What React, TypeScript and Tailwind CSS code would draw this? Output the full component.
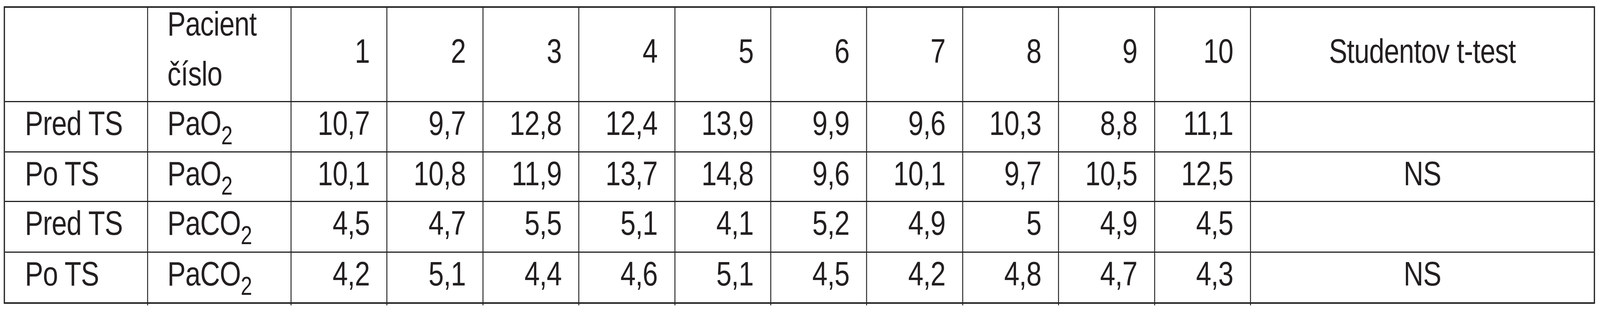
import React, { useLayoutEffect, useState } from 'react';

type Row = {
    label: string;
    param: 'O' | 'CO';
    values: string[];
    test: string;
};

const rows: Row[] = [
    { label: 'Pred TS', param: 'O', values: ['10,7', '9,7', '12,8', '12,4', '13,9', '9,9', '9,6', '10,3', '8,8', '11,1'], test: '' },
    { label: 'Po TS', param: 'O', values: ['10,1', '10,8', '11,9', '13,7', '14,8', '9,6', '10,1', '9,7', '10,5', '12,5'], test: 'NS' },
    { label: 'Pred TS', param: 'CO', values: ['4,5', '4,7', '5,5', '5,1', '4,1', '5,2', '4,9', '5', '4,9', '4,5'], test: '' },
    { label: 'Po TS', param: 'CO', values: ['4,2', '5,1', '4,4', '4,6', '5,1', '4,5', '4,2', '4,8', '4,7', '4,3'], test: 'NS' },
];

// row heights include the 3px rule under each row
const rowHeights = ['h-[129px]', 'h-[127px]', 'h-[130px]', 'h-[127px]'];

const patients = ['1', '2', '3', '4', '5', '6', '7', '8', '9', '10'];

const DESIGN_WIDTH = 5143;

const Gas: React.FC<{ param: 'O' | 'CO' }> = ({ param }) => (
    <span>
        Pa{param}
        <sub className="text-[66px] leading-none align-[-24px] bottom-0">2</sub>
    </span>
);

export default function App() {
    const [scale, setScale] = useState(1);

    useLayoutEffect(() => {
        const update = () => setScale(Math.min(1, document.documentElement.clientWidth / DESIGN_WIDTH));
        update();
        window.addEventListener('resize', update);
        return () => window.removeEventListener('resize', update);
    }, []);

    return (
        <div className="w-full min-h-screen overflow-hidden bg-white">
            <div
                style={{ transform: `scaleX(${scale})` }}
                className="w-[5143px] origin-top-left text-[#231f20] pl-[12px] pt-[16px] font-['Liberation_Sans',Arial,sans-serif] text-[88px] leading-[88px] tracking-[-1px]"
            >
                <div className="w-[5115px] border-4 border-[#222]">
                    {/* header */}
                    <div className="flex h-[242px] border-b-[3px] border-[#222]">
                        <div className="w-[460px] shrink-0 border-r-[3px] border-[#222]" />
                        <div className="w-[461px] shrink-0 border-r-[3px] border-[#222] pl-[62px]">
                            <div className="-mt-[3px]">Pacient</div>
                            <div className="mt-[40px]">číslo</div>
                        </div>
                        {patients.map((p) => (
                            <div key={p} className="w-[308.4px] shrink-0 border-r-[3px] border-[#222] pt-[67px] pr-[54px] text-right">
                                {p}
                            </div>
                        ))}
                        <div className="flex-1 pt-[67px] text-center">Studentov t-test</div>
                    </div>

                    {rows.map((r, i) => (
                        <div
                            key={i}
                            className={`flex ${rowHeights[i]} ${i < rows.length - 1 ? 'border-b-[3px] border-[#222]' : ''}`}
                        >
                            <div className="w-[460px] shrink-0 border-r-[3px] border-[#222] pl-[64px] pt-[10px] whitespace-nowrap">
                                {r.label}
                            </div>
                            <div className="w-[461px] shrink-0 border-r-[3px] border-[#222] pl-[62px] pt-[10px] whitespace-nowrap">
                                <Gas param={r.param} />
                            </div>
                            {r.values.map((v, j) => (
                                <div key={j} className="w-[308.4px] shrink-0 border-r-[3px] border-[#222] pt-[10px] pr-[54px] text-right">
                                    {v}
                                </div>
                            ))}
                            <div className="flex-1 pt-[10px] text-center">{r.test}</div>
                        </div>
                    ))}
                </div>

                {/* column rules run a little past the bottom border */}
                <div className="flex h-[4px] pl-[4px]">
                    <div className="w-[460px] shrink-0 border-r-[3px] border-[#222]" />
                    <div className="w-[461px] shrink-0 border-r-[3px] border-[#222]" />
                    {patients.map((p) => (
                        <div key={p} className="w-[308.4px] shrink-0 border-r-[3px] border-[#222]" />
                    ))}
                </div>
            </div>
        </div>
    );
}
